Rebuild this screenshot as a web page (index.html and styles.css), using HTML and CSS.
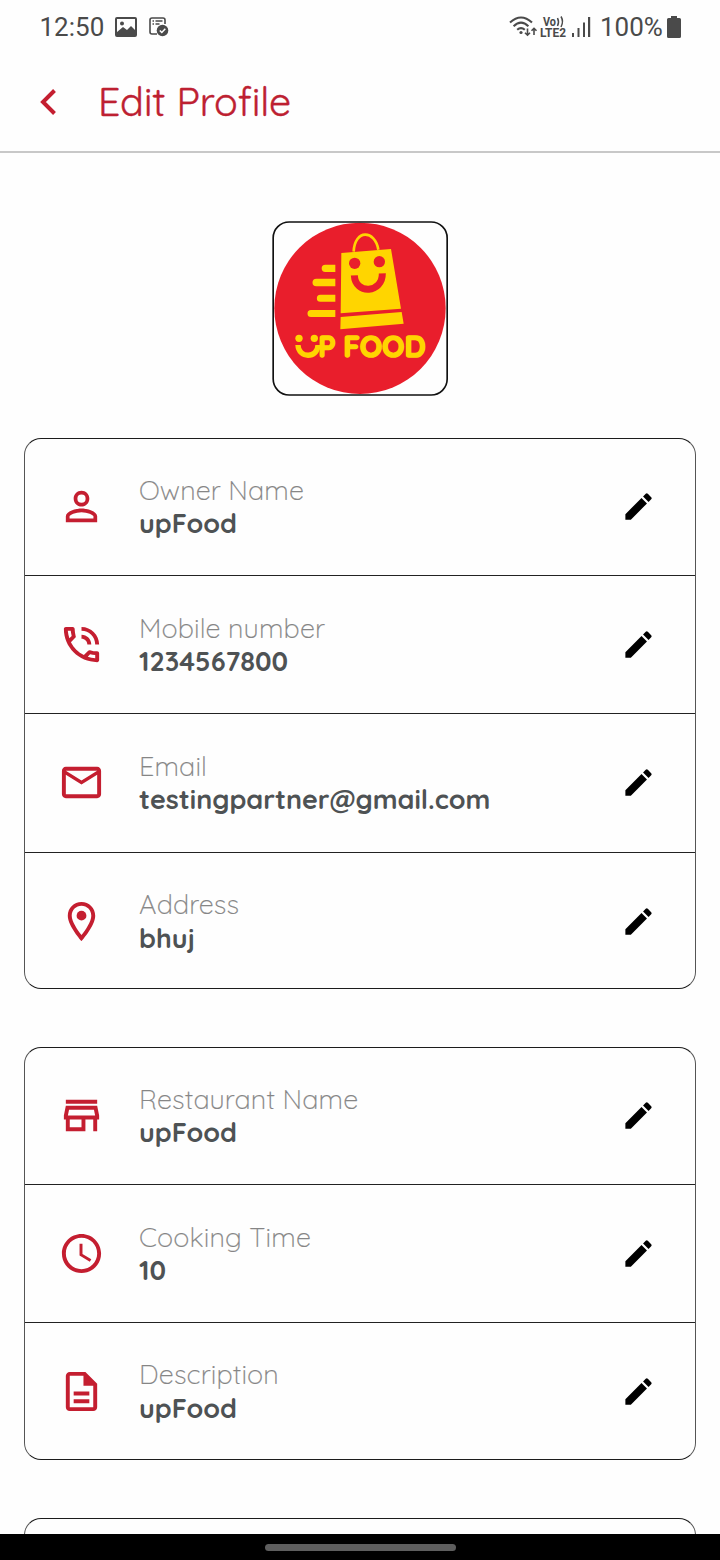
FILE: index.html
```html
<!DOCTYPE html>
<html lang="en">
<head>
<meta charset="utf-8">
<title>Edit Profile</title>
<link rel="stylesheet" href="styles.css">
</head>
<body>
<svg class="defs" aria-hidden="true">
  <symbol id="pencil" viewBox="0 0 24 24"><path d="M3 17.25V21h3.75L17.81 9.94l-3.75-3.75L3 17.25zM20.71 7.04a1 1 0 0 0 0-1.41l-2.34-2.34a1 1 0 0 0-1.41 0l-1.83 1.83 3.75 3.75 1.83-1.83z"/></symbol>
  <symbol id="person" viewBox="0 0 24 24"><path d="M12 5.9a2.1 2.1 0 1 1 0 4.2 2.1 2.1 0 0 1 0-4.2m0 9c2.97 0 6.1 1.46 6.1 2.1v1.1H5.9V17c0-.64 3.13-2.1 6.1-2.1M12 4C9.79 4 8 5.79 8 8s1.79 4 4 4 4-1.790 4-4-1.790-4-4-4zm0 9c-2.670 0-8 1.340-8 4v3h16v-3c0-2.660-5.330-4-8-4z"/></symbol>
  <symbol id="phone" viewBox="0 0 24 24"><path d="M20 15.500c-1.200 0-2.500-.2-3.600-.6h-.3c-.3 0-.5.1-.7.3l-2.200 2.200c-2.800-1.500-5.200-3.800-6.600-6.600l2.200-2.200c.3-.3.4-.7.2-1-.300-1.100-.500-2.400-.500-3.600 0-.5-.5-1-1-1H4c-.5 0-1 .5-1 1 0 9.400 7.600 17 17 17 .5 0 1-.5 1-1v-3.500c0-.5-.500-1-1-1zM5 5h1.500c.1.900.3 1.800.5 2.600L5.800 8.800C5.400 7.600 5.100 6.300 5 5zm14 14c-1.300-.1-2.600-.4-3.800-.8l1.200-1.200c.8.2 1.700.4 2.600.4V19zM15 12h2c0-2.760-2.240-5-5-5v2c1.660 0 3 1.340 3 3zm4 0h2c0-4.970-4.030-9-9-9v2c3.870 0 7 3.130 7 7z"/></symbol>
  <symbol id="mail" viewBox="0 0 24 24"><path d="M20 4H4c-1.100 0-1.990.9-1.990 2L2 18c0 1.100.9 2 2 2h16c1.100 0 2-.9 2-2V6c0-1.100-.9-2-2-2zm0 14H4V8l8 5 8-5v10zm-8-7L4 6h16l-8 5z"/></symbol>
  <symbol id="pin" viewBox="0 0 24 24"><path d="M12 2C8.130 2 5 5.130 5 9c0 5.250 7 13 7 13s7-7.750 7-13c0-3.870-3.130-7-7-7zM7 9c0-2.760 2.240-5 5-5s5 2.240 5 5c0 2.880-2.880 7.190-5 9.880C9.920 16.210 7 11.850 7 9z"/><circle cx="12" cy="9" r="2.500"/></symbol>
  <symbol id="store" viewBox="0 0 24 24"><path d="M18.360 9l.6 3H5.040l.6-3h12.720M20 4H4v2h16V4zm0 3H4l-1 5v2h1v6h10v-6h4v6h2v-6h1v-2l-1-5zM6 18v-4h6v4H6z"/></symbol>
  <symbol id="clock" viewBox="0 0 24 24"><path d="M11.990 2C6.470 2 2 6.480 2 12s4.470 10 9.990 10C17.520 22 22 17.520 22 12S17.520 2 11.990 2zM12 20c-4.420 0-8-3.580-8-8s3.580-8 8-8 8 3.580 8 8-3.580 8-8 8zm.5-13H11v6l5.250 3.150.75-1.230-4.500-2.670z"/></symbol>
  <symbol id="doc" viewBox="0 0 24 24"><path d="M8 16h8v2H8zm0-4h8v2H8zm6-10H6c-1.100 0-2 .9-2 2v16c0 1.100.89 2 1.990 2H18c1.100 0 2-.9 2-2V8l-6-6zm4 18H6V4h7v5h5v11z"/></symbol>
</svg>

<div class="screen">
  <div class="status">
    <div class="status-side">
      <span class="status-time">12:50</span>
      <svg class="ic-picture" viewBox="0 0 22 20"><path fill-rule="evenodd" d="M2 0h18a2 2 0 0 1 2 2v16a2 2 0 0 1-2 2H2a2 2 0 0 1-2-2V2a2 2 0 0 1 2-2zM2 2v13l6-5 4 3 4-4 4 4V2zM7 4.500a2 2 0 1 1 0 4 2 2 0 0 1 0-4z"/></svg>
      <svg class="ic-task" viewBox="0 0 20 20"><path d="M8 17H3a2 2 0 0 1-2-2V3a2 2 0 0 1 2-2h11a2 2 0 0 1 2 2v4" fill="none" stroke="#4a4a4a" stroke-width="1.600"/><path d="M3.500 4h1.500M6.500 4h7M3.500 7h1.500M6.500 7h4" stroke="#4a4a4a" stroke-width="1.400"/><circle cx="13.500" cy="13.500" r="5.800"/><path d="M10.800 13.500l2 2 3.500-3.800" fill="none" stroke="#fff" stroke-width="1.500"/></svg>
    </div>
    <div class="status-side">
      <svg class="ic-signal" viewBox="0 0 84 24">
        <g fill="none" stroke="#4a4a4a" stroke-width="2.100">
          <path d="M1 7.500Q12-2.500 23 7.500M4.600 11.200Q12 4.200 19.400 11.200M8.200 14.800Q12 11.400 15.800 14.800"/>
          <path d="M18.500 13.500v6.500M16 17.700l2.500 2.500 2.500-2.500M25 20v-6.500M22.500 15.800l2.500-2.500 2.500 2.500" stroke-width="1.600"/>
        </g>
        <circle cx="12" cy="17.500" r="1.600"/>
        <text class="net" x="34" y="10.500" textLength="13" lengthAdjust="spacingAndGlyphs">Vo</text>
        <path d="M48.500 3q2 4 0 8M52 1.500q3 5 0 10.500" fill="none" stroke="#4a4a4a" stroke-width="1.500"/>
        <text class="net" x="31" y="22" textLength="26" lengthAdjust="spacingAndGlyphs">LTE2</text>
        <path d="M63 18h2v4h-2zM68.500 13h2v9h-2zM74 7.500h2V22h-2zM79 2h2.200v20H79z"/>
      </svg>
      <span class="status-pct">100%</span>
      <svg class="ic-battery" viewBox="0 0 14 22"><path d="M4 0h6v2h2.500A1.500 1.500 0 0 1 14 3.500v17a1.500 1.500 0 0 1-1.500 1.500h-11A1.500 1.500 0 0 1 0 20.500v-17A1.500 1.500 0 0 1 1.500 2H4z"/></svg>
    </div>
  </div>

  <header class="bar">
    <svg class="back" viewBox="0 0 16 26"><path d="M14.500 1.500L3 13l11.500 11.500" fill="none" stroke="#c41e30" stroke-width="4"/></svg>
    <h1 class="title">Edit Profile</h1>
  </header>

  <main class="content">
    <svg class="logo" viewBox="36 33 528 525">
      <circle cx="300" cy="295" r="257" fill="#e91e2c"/>
      <rect x="39.500" y="36" width="522" height="519" rx="48" fill="none" stroke="#111" stroke-width="5"/>
      <g fill="#ffd500">
        <path d="M244 129l149-12 30 179-181 14zM242 321l183-15 6 35-190 17z"/>
        <path d="M226 164h-30a11 11 0 0 0 0 22h30zM226 206h-57a11.500 11.500 0 0 0 0 23h57zM226 254h-45a10.500 10.500 0 0 0 0 21h45zM226 300h-73a10.500 10.500 0 0 0 0 21h73z"/>
        <circle cx="117" cy="385" r="11"/><circle cx="163" cy="385" r="11"/>
        <text class="brand" x="175" y="440" textLength="52" lengthAdjust="spacingAndGlyphs">P</text>
        <text class="brand" x="250" y="440" textLength="247" lengthAdjust="spacingAndGlyphs">FOOD</text>
      </g>
      <path d="M281 125c3-68 64-66 74-6" fill="none" stroke="#ffd500" stroke-width="8"/>
      <path d="M114 405c1 40 59 42 60 0" fill="none" stroke="#ffd500" stroke-width="16"/>
      <g fill="#e91e2c"><circle cx="284" cy="160" r="17"/><circle cx="358" cy="155" r="17"/></g>
      <path d="M283 196c3 59 85 54 84-6" fill="none" stroke="#e91e2c" stroke-width="21"/>
    </svg>

    <section class="card card-owner">
      <div class="row row-up"><svg class="lead"><use href="#person"/></svg><div class="text"><div class="label">Owner Name</div><div class="value">upFood</div></div><svg class="edit"><use href="#pencil"/></svg></div>
      <div class="row"><svg class="lead"><use href="#phone"/></svg><div class="text"><div class="label">Mobile number</div><div class="value">1234567800</div></div><svg class="edit"><use href="#pencil"/></svg></div>
      <div class="row row-up"><svg class="lead"><use href="#mail"/></svg><div class="text"><div class="label">Email</div><div class="value">testingpartner@gmail.com</div></div><svg class="edit"><use href="#pencil"/></svg></div>
      <div class="row row-down"><svg class="lead"><use href="#pin"/></svg><div class="text"><div class="label">Address</div><div class="value">bhuj</div></div><svg class="edit"><use href="#pencil"/></svg></div>
    </section>

    <section class="card card-shop">
      <div class="row row-up"><svg class="lead"><use href="#store"/></svg><div class="text"><div class="label">Restaurant Name</div><div class="value">upFood</div></div><svg class="edit"><use href="#pencil"/></svg></div>
      <div class="row"><svg class="lead"><use href="#clock"/></svg><div class="text"><div class="label">Cooking Time</div><div class="value">10</div></div><svg class="edit"><use href="#pencil"/></svg></div>
      <div class="row"><svg class="lead"><use href="#doc"/></svg><div class="text"><div class="label">Description</div><div class="value">upFood</div></div><svg class="edit"><use href="#pencil"/></svg></div>
    </section>

    <section class="card card-next"></section>
  </main>

  <nav class="nav"><span class="handle"></span></nav>
</div>
</body>
</html>
```
FILE: styles.css
```css
* { box-sizing: border-box; }
body { margin: 0; background: #fefefe; }
.defs { display: none; }
.screen {
  width: 720px; height: 1560px; overflow: hidden;
  display: flex; flex-direction: column;
  background: #fefefe;
  font-family: Quicksand, Inter, "Open Sans", sans-serif;
}
.status {
  flex: none; height: 54px; padding: 0 39px;
  display: flex; justify-content: space-between; align-items: center;
  font: 400 26px/54px Roboto, sans-serif; color: #4a4a4a; fill: #4a4a4a;
}
.status-side { display: flex; align-items: center; }
.status-time { width: 76px; padding-left: 0.500px; }
.ic-picture { width: 22px; height: 20px; }
.ic-task { width: 20px; height: 20px; margin-left: 12px; }
.ic-signal { width: 84px; height: 24px; }
.net { font: 700 12px Roboto, sans-serif; }
.status-pct { margin-left: 7px; width: 67px; }
.ic-battery { width: 14px; height: 22px; }
.bar {
  flex: none; height: 99px; padding: 0 40px;
  display: flex; align-items: center;
  border-bottom: 2px solid #c8c8c8;
}
.back { width: 16px; height: 26px; margin-right: 42px; margin-bottom: 1px; }
.title {
  margin: 0 0 2px; font-size: 39.300px; font-weight: 400; line-height: 46px;
  color: #bd2031; -webkit-text-stroke: 0.400px #bd2031;
}
.content {
  flex: 1; min-height: 0; overflow: hidden; padding: 68px 24px 0;
  display: flex; flex-direction: column;
}
.logo { flex: none; align-self: center; width: 176px; height: 175px; margin-bottom: 42px; }
.brand { font: 700 86px Quicksand, Lato, sans-serif; stroke: #ffd500; stroke-width: 5px; }
.card {
  flex: none; display: grid;
  border: 1px solid #1c1c1c; border-left-color: #555; border-right-color: #555;
  border-radius: 17px;
}
.card-owner { grid-template-rows: 137px 138px 139px 135px; margin-bottom: 58px; }
.card-shop { grid-template-rows: 137px 138px 136px; margin-bottom: 58px; }
.card-next { height: 138px; }
.row {
  display: flex; align-items: center; padding: 0 39px 0 33px;
  border-bottom: 1px solid #222;
}
.row-up { padding-bottom: 1px; }
.row-down { padding-top: 1px; }
.row:last-child { border-bottom: 0; }
.lead { width: 47px; height: 47px; fill: #c41e30; }
.text { flex: 1; margin-left: 34px; padding-top: 1px; }
.label, .value { font-size: 27px; line-height: 33.300px; }
.label { font-weight: 300; color: #858585; letter-spacing: 0.130px; -webkit-text-stroke: 0.200px #8c8c8c; }
.value { font-size: 26.950px; font-weight: 700; color: #4e5254; }
.edit { width: 35px; height: 35px; fill: #000; }
.nav { flex: none; height: 26px; background: #000; display: flex; justify-content: center; align-items: center; }
.handle { width: 191px; height: 7px; border-radius: 4px; background: #5e5e5e; }
```
